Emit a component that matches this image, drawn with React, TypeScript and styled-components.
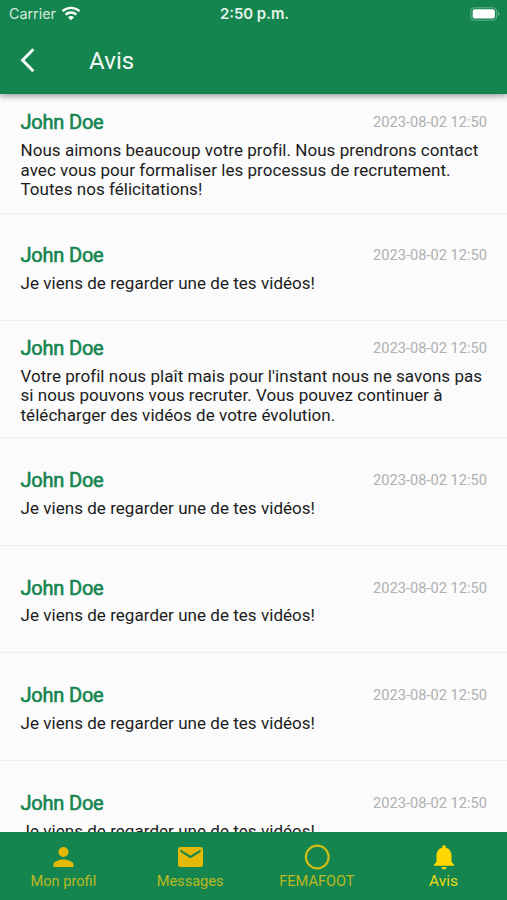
import React from 'react';
import styled, { createGlobalStyle } from 'styled-components';

const Global = createGlobalStyle`
  * { box-sizing: border-box; }
  body { margin: 0; background: #fbfbfb; font-family: Roboto, sans-serif; }
`;
const Screen = styled.div`
  width: 507px; height: 900px; display: flex; flex-direction: column; overflow: hidden; background: #fbfbfb;
`;
const Header = styled.header`
  flex: none; height: 94px; background: #14854f; color: #f4faf7; z-index: 1;
  box-shadow: 0 2px 6px rgba(0,0,0,.4);
`;
const StatusBar = styled.div`
  height: 27px; display: grid; grid-template-columns: 1fr auto 1fr; align-items: center; padding: 0 7px 0 9px;
  font-family: Inter, sans-serif; font-size: 14.300px; color: #d5eadf;
`;
const Carrier = styled.div`display: flex; align-items: center; gap: 5px;`;
const Clock = styled.div`font-weight: 600; font-size: 14.900px; color: #e3f3ea;`;
const Battery = styled.div`display: flex; justify-content: flex-end;`;
const TitleBar = styled.div`height: 67px; display: flex; align-items: center; padding-left: 20px; gap: 54px;`;
const Title = styled.h1`margin: 0; font-size: 24px; font-weight: 400; line-height: 28px; letter-spacing: .1px;`;
const List = styled.main`flex: 1; min-height: 0; overflow: hidden;`;
const Row = styled.article<{ $height: number }>`
  height: ${p => p.$height}px; padding: 3px 20px 0 20.500px; border-bottom: 1px solid #f0f0f0;
  display: flex; flex-direction: column; justify-content: center;
`;
const RowTop = styled.div`display: flex; justify-content: space-between; align-items: center; height: 25px;`;
const Name = styled.h2`
  margin: 0; font-size: 20px; font-weight: 400; letter-spacing: -.2px; color: #14854f; -webkit-text-stroke: .6px #14854f;
`;
const DateText = styled.time`font-size: 14.650px; color: #b0b0b0;`;
const Body = styled.p`
  margin: 6.200px 0 0; font-size: 17px; line-height: 19.6px; letter-spacing: .04px; color: #1b1b1b; white-space: pre-line;
`;
const Nav = styled.nav`
  flex: none; height: 68px; background: #14854f; display: grid; grid-template-columns: repeat(4, 1fr);
`;
const Tab = styled.div<{ $active?: boolean }>`
  display: flex; flex-direction: column; align-items: center; padding-top: 10px;
  font-size: ${p => (p.$active ? 15.5 : 14.6)}px; line-height: 18px;
  color: ${p => (p.$active ? '#e8dc14' : '#bcb81f')};
`;
const TabIcon = styled.svg<{ $color: string }>`
  width: 30px; height: 30px; color: ${p => p.$color};
`;

const short = 'Je viens de regarder une de tes vidéos!';
const notices = [
  { h: 119.5, text: 'Nous aimons beaucoup votre profil. Nous prendrons contact\navec vous pour formaliser les processus de recrutement.\nToutes nos félicitations!' },
  { h: 107.5, text: short },
  { h: 117, text: "Votre profil nous plaît mais pour l'instant nous ne savons pas\nsi nous pouvons vous recruter. Vous pouvez continuer à\ntélécharger des vidéos de votre évolution." },
  { h: 108, text: short },
  { h: 107, text: short },
  { h: 108, text: short },
  { h: 107.5, text: short },
];
const tabs = [
  { label: 'Mon profil', color: '#e4b906', icon: <path d="M12.400 12a4 4 0 1 0 0-8 4 4 0 0 0 0 8zm0 2c-2.67 0-8 1.34-8 4v2h16v-2c0-2.66-5.33-4-8-4z" fill="currentColor" /> },
  { label: 'Messages', color: '#e4b906', icon: <path d="M20.400 4h-16a2 2 0 0 0-2 2v12a2 2 0 0 0 2 2h16a2 2 0 0 0 2-2V6a2 2 0 0 0-2-2zm0 4-8 5-8-5V6l8 5 8-5v2z" fill="currentColor" /> },
  { label: 'FEMAFOOT', color: '#d2bd15', icon: <circle cx="12.200" cy="12" r="9.100" fill="none" stroke="currentColor" strokeWidth="1.700" /> },
  { label: 'Avis', color: '#ffd600', icon: <path d="M12 22a2 2 0 0 0 2-2h-4a2 2 0 0 0 2 2zm6-6v-5c0-3.07-1.63-5.64-4.5-6.32V4a1.5 1.5 0 0 0-3 0v.68C7.64 5.36 6 7.92 6 11v5l-2 2v1h16v-1l-2-2z" fill="currentColor" /> },
];

export default function App() {
  return (
    <>
      <Global />
      <Screen>
        <Header>
          <StatusBar>
            <Carrier>
              Carrier
              <svg width="20" height="15" viewBox="0 0 20 15" fill="none" stroke="#fff" strokeWidth="2.4">
                <path d="M1.500 5.200a12.500 12.500 0 0 1 17 0M4.600 8.600a8 8 0 0 1 10.800 0" />
                <path d="M7 11.300a4.500 4.500 0 0 1 6 0l-3 3z" fill="#fff" stroke="none" />
              </svg>
            </Carrier>
            <Clock>2:50 p.m.</Clock>
            <Battery>
              <svg width="30" height="14" viewBox="0 0 30 14">
                <rect x=".75" y=".75" width="26" height="12.500" rx="4" fill="none" stroke="#5eac88" strokeWidth="1.200" />
                <rect x="2.700" y="2.300" width="22.200" height="9.200" rx="2" fill="#fff" />
                <path d="M28 5c2 .6 2 3.400 0 4z" fill="#5eac88" />
              </svg>
            </Battery>
          </StatusBar>
          <TitleBar>
            <svg width="15" height="26" viewBox="0 0 15 26" fill="none" stroke="#f4faf7" strokeWidth="3"><path d="M13.400 1.300 2.600 12.300l10.800 11" /></svg>
            <Title>Avis</Title>
          </TitleBar>
        </Header>
        <List>
          {notices.map((n, i) => (
            <Row key={i} $height={n.h}>
              <RowTop><Name>John Doe</Name><DateText>2023-08-02 12:50</DateText></RowTop>
              <Body>{n.text}</Body>
            </Row>
          ))}
        </List>
        <Nav>
          {tabs.map(t => (
            <Tab key={t.label} $active={t.label === 'Avis'}>
              <TabIcon viewBox="0 0 24 24" $color={t.color}>{t.icon}</TabIcon>
              {t.label}
            </Tab>
          ))}
        </Nav>
      </Screen>
    </>
  );
}
